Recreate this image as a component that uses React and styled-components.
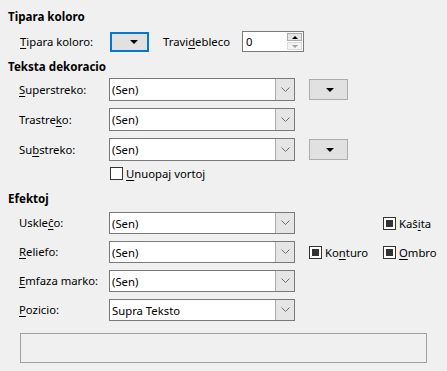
import React from "react";
import styled, { createGlobalStyle } from "styled-components";

const GlobalStyle = createGlobalStyle`
  html, body {
    margin: 0;
    padding: 0;
    background: #f0f0f0;
  }
  body {
    font-family: "Noto Sans", "Open Sans", sans-serif;
    font-size: 11.3px;
    color: #000;
  }
`;

const Page = styled.div`
  width: 447px;
  height: 371px;
  box-sizing: border-box;
  padding: 10px 0 0 0;
  display: flex;
  flex-direction: column;
`;

const Header = styled.div`
  font-weight: 700;
  font-size: 11.6px;
  height: 14px;
  line-height: 14px;
  padding-left: 8px;
  margin-top: ${(p) => p.mt || 0}px;
`;

const Row = styled.div`
  display: grid;
  grid-template-columns: 90px 186px 1fr;
  align-items: center;
  padding-left: 19px;
  height: ${(p) => p.h || 23}px;
  margin-top: ${(p) => p.mt || 0}px;
`;

const TopRow = styled.div`
  display: flex;
  align-items: center;
  padding-left: 20px;
  height: 21px;
  margin-top: 7px;
`;

const Label = styled.span`
  white-space: nowrap;
  line-height: 14px;
  width: ${(p) => (p.w ? `${p.w}px` : "auto")};
  flex-shrink: 0;
`;

const U = styled.span`
  text-decoration: underline;
  text-underline-offset: 2px;
`;

const ColorBtn = styled.div`
  box-sizing: border-box;
  width: ${(p) => p.w}px;
  height: ${(p) => p.h}px;
  background: #e1e1e1;
  border: ${(p) => (p.focus ? "2px solid #0078d7" : "1px solid #adadad")};
  display: flex;
  align-items: center;
  justify-content: flex-end;
  padding-right: ${(p) => p.pr}px;
  margin-right: ${(p) => p.mr || 0}px;
`;

const Tri = styled.span`
  width: 0;
  height: 0;
  border-left: 4px solid transparent;
  border-right: 4px solid transparent;
  border-top: 4px solid #000;
`;

const Spin = styled.div`
  box-sizing: border-box;
  width: 62px;
  height: 21px;
  background: #fff;
  border: 1px solid #7a7a7a;
  display: flex;
  align-items: stretch;
`;

const SpinText = styled.div`
  flex: 1;
  padding-left: 3px;
  line-height: 19px;
`;

const SpinBtns = styled.div`
  width: 15px;
  display: flex;
  flex-direction: column;
  padding: 1px 1px 1px 0;
  gap: 1px;
`;

const SpinBtn = styled.div`
  flex: 1;
  background: ${(p) => (p.dis ? "#f4f4f4" : "#e5e5e5")};
  border: 1px solid ${(p) => (p.dis ? "#dadada" : "#adadad")};
  display: flex;
  align-items: center;
  justify-content: center;
`;

const SmallTri = styled.span`
  width: 0;
  height: 0;
  border-left: 3px solid transparent;
  border-right: 3px solid transparent;
  ${(p) =>
    p.up
      ? `border-bottom: 3px solid ${p.dis ? "#a0a0a0" : "#000"};`
      : `border-top: 3px solid ${p.dis ? "#a0a0a0" : "#000"};`}
`;

const Combo = styled.div`
  box-sizing: border-box;
  width: 186px;
  height: ${(p) => p.h || 23}px;
  background: #fff;
  border: 1px solid #7a7a7a;
  display: flex;
  align-items: stretch;
`;

const ComboText = styled.div`
  flex: 1;
  padding-left: 2px;
  display: flex;
  align-items: center;
`;

const DropBtn = styled.div`
  width: 18px;
  background: #e5e5e5;
  border-left: 1px solid #adadad;
  display: flex;
  align-items: center;
  justify-content: center;
`;

const Extra = styled.div`
  display: grid;
  grid-template-columns: 74px 1fr;
  align-items: center;
  padding-left: 14px;
  height: 100%;
`;

const Check = styled.label`
  display: flex;
  align-items: center;
  gap: 3px;
  grid-column: ${(p) => p.col || "auto"};
`;

const Box = styled.span`
  box-sizing: border-box;
  width: 13px;
  height: 13px;
  border: 1px solid #333;
  background: #fff;
  display: flex;
  align-items: center;
  justify-content: center;
  &::after {
    content: "";
    display: ${(p) => (p.on ? "block" : "none")};
    width: 7px;
    height: 7px;
    background: #333;
  }
`;

const CheckRow = styled.div`
  display: flex;
  padding-left: 110px;
  height: 16px;
  margin-top: 4px;
  align-items: center;
`;

const Preview = styled.div`
  box-sizing: border-box;
  margin: 12px 0 0 20px;
  width: 407px;
  height: 30px;
  border: 1px solid #a0a0a0;
`;

const Chevron = () => (
  <svg width="9" height="6" viewBox="0 0 9 6">
    <path d="M0.5 0.5 L4.5 4.5 L8.5 0.5" fill="none" stroke="#6d6d6d" strokeWidth="1" />
  </svg>
);

const Select = ({ value, h }) => (
  <Combo h={h}>
    <ComboText>{value}</ComboText>
    <DropBtn>
      <Chevron />
    </DropBtn>
  </Combo>
);

const App = () => (
  <>
    <GlobalStyle />
    <Page>
      <Header>Tipara koloro</Header>
      <TopRow>
        <Label w={90}>
          <U>T</U>ipara koloro:
        </Label>
        <ColorBtn w={39} h={20} focus pr={9} mr={14}>
          <Tri />
        </ColorBtn>
        <Label w={79}>
          Travi<U>d</U>ebleco
        </Label>
        <Spin>
          <SpinText>0</SpinText>
          <SpinBtns>
            <SpinBtn>
              <SmallTri up />
            </SpinBtn>
            <SpinBtn dis>
              <SmallTri dis />
            </SpinBtn>
          </SpinBtns>
        </Spin>
      </TopRow>

      <Header mt={8}>Teksta dekoracio</Header>
      <Row mt={4}>
        <Label>
          <U>S</U>uperstreko:
        </Label>
        <Select value="(Sen)" />
        <Extra>
          <ColorBtn w={39} h={21} pr={13}>
            <Tri />
          </ColorBtn>
        </Extra>
      </Row>
      <Row mt={7}>
        <Label>
          Trastre<U>k</U>o:
        </Label>
        <Select value="(Sen)" />
      </Row>
      <Row mt={7}>
        <Label>
          Su<U>b</U>streko:
        </Label>
        <Select value="(Sen)" />
        <Extra>
          <ColorBtn w={39} h={21} pr={13}>
            <Tri />
          </ColorBtn>
        </Extra>
      </Row>
      <CheckRow>
        <Check>
          <Box />
          <span>
            <U>U</U>nuopaj vortoj
          </span>
        </Check>
      </CheckRow>

      <Header mt={11}>Efektoj</Header>
      <Row mt={6} h={22}>
        <Label>
          Uskle<U>ĉ</U>o:
        </Label>
        <Select value="(Sen)" h={22} />
        <Extra>
          <Check col="2">
            <Box on />
            <span>
              Kaŝ<U>i</U>ta
            </span>
          </Check>
        </Extra>
      </Row>
      <Row mt={7} h={22}>
        <Label>
          <U>R</U>eliefo:
        </Label>
        <Select value="(Sen)" h={22} />
        <Extra>
          <Check>
            <Box on />
            <span>
              Ko<U>n</U>turo
            </span>
          </Check>
          <Check>
            <Box on />
            <span>
              <U>O</U>mbro
            </span>
          </Check>
        </Extra>
      </Row>
      <Row mt={7} h={22}>
        <Label>
          <U>E</U>mfaza marko:
        </Label>
        <Select value="(Sen)" h={22} />
      </Row>
      <Row mt={7} h={22}>
        <Label>
          <U>P</U>ozicio:
        </Label>
        <Select value="Supra Teksto" h={22} />
      </Row>
      <Preview />
    </Page>
  </>
);

export default App;
